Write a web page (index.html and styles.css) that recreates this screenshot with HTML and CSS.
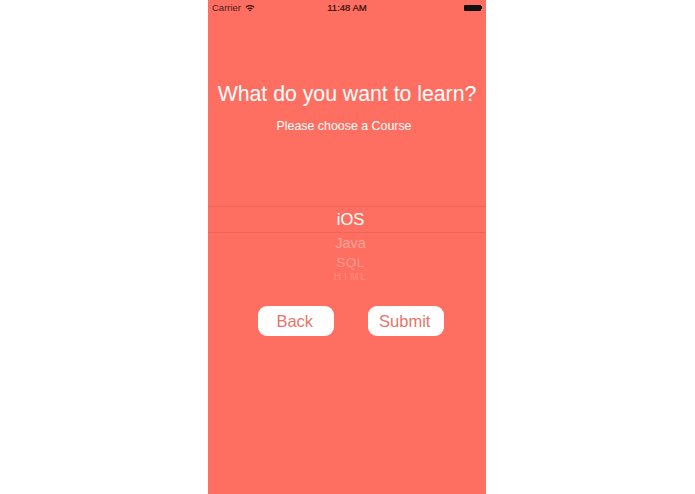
FILE: index.html
```html
<!DOCTYPE html>
<html lang="en">
<head>
<meta charset="utf-8">
<title>Course picker</title>
<link rel="stylesheet" href="styles.css">
</head>
<body>
<main class="phone">
  <header class="status">
    <div class="status-left">
      <span>Carrier</span>
      <svg class="wifi" viewBox="0 0 12 9" width="10" height="8" aria-hidden="true">
        <path d="M0.5 3.2C3.6 0.2 8.4 0.2 11.5 3.2L10.4 4.3C7.9 1.9 4.1 1.9 1.6 4.3Z"/>
        <path d="M2.6 5.2C4.6 3.3 7.4 3.3 9.4 5.2L8.3 6.3C6.9 5 5.1 5 3.7 6.3Z"/>
        <path d="M4.6 7.1C5.4 6.4 6.6 6.4 7.4 7.1L6 8.6Z"/>
      </svg>
    </div>
    <span class="status-time">11:48 AM</span>
    <div class="status-right">
      <span class="battery"></span>
      <span class="battery-tip"></span>
    </div>
  </header>
  <h1 class="title">What do you want to learn?</h1>
  <p class="subtitle">Please choose a Course</p>
  <section class="picker">
    <div class="picker-item selected">iOS</div>
    <div class="picker-item java">Java</div>
    <div class="picker-item sql">SQL</div>
    <div class="picker-item html">HTML</div>
  </section>
  <div class="actions">
    <button class="btn" type="button">Back</button>
    <button class="btn" type="button">Submit</button>
  </div>
</main>
</body>
</html>
```
FILE: styles.css
```css
* { box-sizing: border-box; }
html, body { margin: 0; height: 100%; background: #fff; }
body { overflow: hidden; font-family: "Liberation Sans", sans-serif; }
.phone {
  width: 278px;
  height: 494px;
  margin-left: 208px;
  background: #ff6f61;
  color: #fff;
  display: flex;
  flex-direction: column;
  overflow: hidden;
}
.status {
  height: 14px;
  padding: 1px 4px 0;
  display: grid;
  grid-template-columns: 1fr auto 1fr;
  align-items: center;
  color: #4a1c18;
  font-size: 9.5px;
}
.status-left { display: flex; align-items: center; gap: 4px; }
.wifi { fill: #3a1512; }
.status-time { font-size: 9.5px; font-weight: 400; color: #2e0f0c; -webkit-text-stroke: 0.2px #2e0f0c; }
.status-right { display: flex; justify-content: flex-end; align-items: center; }
.battery { width: 17px; height: 6px; background: #111; border-radius: 1px; }
.battery-tip { width: 1px; height: 3px; background: #111; }
.title {
  margin: 67px 0 0;
  text-align: center;
  font-size: 21.25px;
  line-height: 26px;
  font-weight: 400;
  color: #fff;
}
.subtitle {
  margin: 12px 0 0;
  padding-right: 6px;
  text-align: center;
  font-size: 12.4px;
  line-height: 14px;
  color: #fff;
}
.picker {
  margin-top: 73px;
  height: 77px;
  padding-left: 7px;
  overflow: hidden;
  text-align: center;
}
.picker-item { white-space: nowrap; }
.selected {
  height: 27px;
  line-height: 25px;
  font-size: 16.5px;
  border-top: 1px solid #ed6458;
  border-bottom: 1px solid #ed6458;
  margin-left: -7px;
  padding-left: 7px;
}
.java { height: 20px; line-height: 20px; font-size: 14.5px; color: #ffa299; }
.sql { height: 20px; line-height: 20px; font-size: 13.5px; letter-spacing: 0.3px; color: #ff9a90; }
.html {
  height: 10px;
  line-height: 8px;
  font-size: 10px;
  letter-spacing: 1.6px;
  color: #ff8f84;
  overflow: hidden;
}
.actions {
  margin-top: 23px;
  padding-left: 50px;
  display: flex;
  gap: 34.5px;
}
.btn {
  width: 75.5px;
  height: 30px;
  padding: 0 2px 0 0;
  border: 0;
  border-radius: 9px;
  background: #fff;
  color: #e8746a;
  font-family: "Liberation Sans", sans-serif;
  font-size: 16.5px;
}
```
